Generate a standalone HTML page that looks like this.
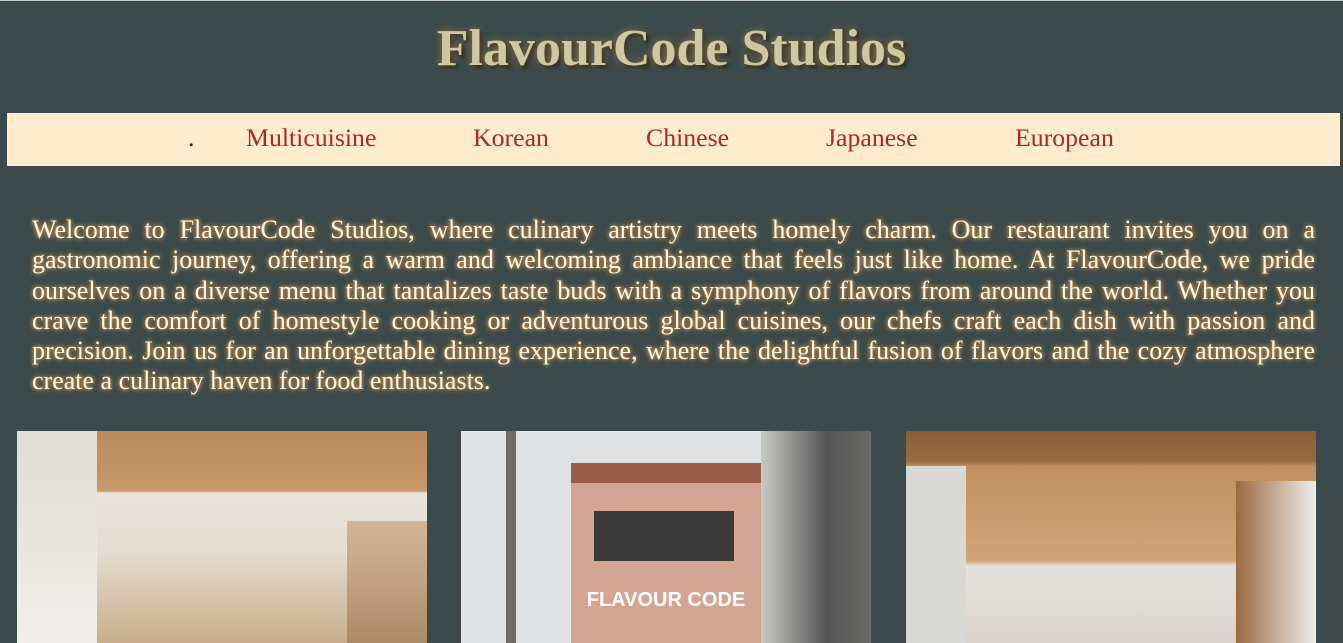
<!DOCTYPE html>
<html><head><meta charset="utf-8"><style>
html,body{margin:0;padding:0;}
body{width:1343px;height:642px;overflow:hidden;background:#3b4a4a;font-family:"Liberation Serif",serif;position:relative;border-top:1px solid #c8c8c8;box-sizing:border-box;}
h1{position:absolute;left:0;width:1343px;top:18px;margin:0;text-align:center;font-size:52px;font-weight:bold;color:#cdc8a2;text-shadow:0 0 8px #a07a45, 2px 2px 4px #000;line-height:60px;}
.nav{position:absolute;left:7px;top:112px;width:1333px;height:53px;background:#ffebcd;}
.nav span{position:absolute;top:11px;font-size:25.8px;color:#a52a2a;line-height:28px;}
.p{position:absolute;left:32px;top:214px;width:1283px;margin:0;font-size:26px;line-height:30.3px;color:#fff6e3;text-shadow:0 0 4px #d8a060,0 0 6px #b07838;}
.p div{text-align:justify;text-align-last:justify;white-space:nowrap;}
.p div.l{text-align-last:left;}
.img{position:absolute;top:430px;width:410px;height:212px;}
</style></head><body>
<h1>FlavourCode Studios</h1>
<div class="nav">
<span style="left:181px;color:#222">.</span>
<span style="left:239px">Multicuisine</span>
<span style="left:466px">Korean</span>
<span style="left:639px">Chinese</span>
<span style="left:819px">Japanese</span>
<span style="left:1008px">European</span>
</div>
<div class="p">
<div>Welcome to FlavourCode Studios, where culinary artistry meets homely charm. Our restaurant invites you on a</div>
<div>gastronomic journey, offering a warm and welcoming ambiance that feels just like home. At FlavourCode, we pride</div>
<div>ourselves on a diverse menu that tantalizes taste buds with a symphony of flavors from around the world. Whether you</div>
<div>crave the comfort of homestyle cooking or adventurous global cuisines, our chefs craft each dish with passion and</div>
<div>precision. Join us for an unforgettable dining experience, where the delightful fusion of flavors and the cozy atmosphere</div>
<div class="l">create a culinary haven for food enthusiasts.</div>
</div>
<div class="img" style="left:17px;background:linear-gradient(180deg,#b98a5c 0,#c89a6a 60px,#e8e4dc 62px,#e4ddd0 120px,#c9ad8a 212px);">
<div style="position:absolute;left:0;top:0;width:80px;height:212px;background:linear-gradient(180deg,#e0ddd6,#f0eeea);"></div>
<div style="position:absolute;left:330px;top:90px;width:80px;height:122px;background:linear-gradient(180deg,#c8a27a,#a07b55);opacity:.7"></div>
</div>
<div class="img" style="left:461px;background:#dfe2e2;">
<div style="position:absolute;left:110px;top:35px;width:190px;height:177px;background:#d4a595;"></div>
<div style="position:absolute;left:110px;top:32px;width:190px;height:20px;background:#9a5e48;"></div>
<div style="position:absolute;left:133px;top:80px;width:140px;height:50px;background:#3a3a3a;"></div>
<div style="position:absolute;left:300px;top:0;width:110px;height:212px;background:linear-gradient(90deg,#c9c9c6,#555 60%,#6a6a68);"></div>
<div style="position:absolute;left:45px;top:0;width:10px;height:212px;background:#6f6a64;"></div>
<div style="position:absolute;left:110px;top:158px;width:190px;text-align:center;color:#fff;font:bold 20px 'Liberation Sans',sans-serif;">FLAVOUR CODE</div>
</div>
<div class="img" style="left:906px;background:linear-gradient(180deg,#8a6038 0,#9a6a40 30px,#c09060 35px,#d0a678 130px,#e4e2de 135px,#d9d4cc 212px);">
<div style="position:absolute;left:0;top:35px;width:60px;height:177px;background:#d8d8d4;"></div>
<div style="position:absolute;left:330px;top:50px;width:80px;height:162px;background:linear-gradient(90deg,#9a6a40,#eeeeea);"></div>
</div>
</body></html>
